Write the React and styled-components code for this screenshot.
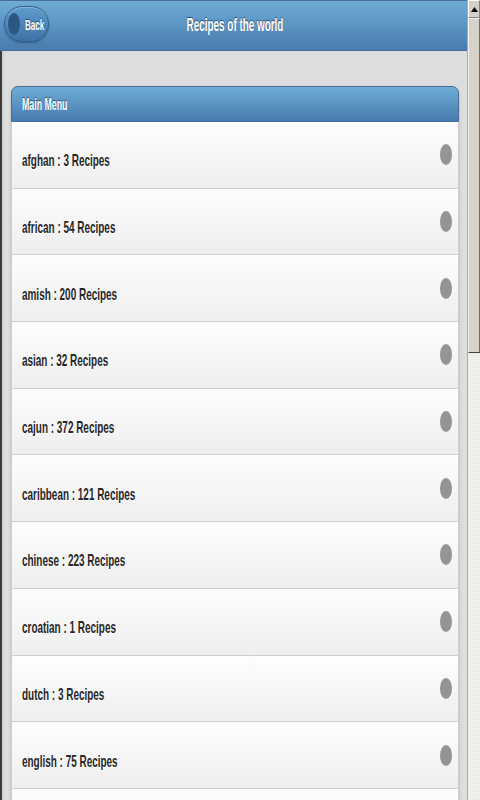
import React from "react";
import styled, { createGlobalStyle } from "styled-components";

const Global = createGlobalStyle`
  html, body { margin: 0; padding: 0; height: 800px; overflow: hidden; background: #dddddd; }
  body { font-family: "Liberation Sans", Arial, sans-serif; }
  * { box-sizing: border-box; }
`;

const Shell = styled.div`
  display: flex;
  width: 480px;
  height: 800px;
  overflow: hidden;
`;

const Main = styled.div`
  flex: 1;
  display: flex;
  flex-direction: column;
  min-width: 0;
`;

const Header = styled.header`
  height: 51px;
  flex: none;
  display: grid;
  grid-template-columns: 1fr auto 1fr;
  align-items: center;
  padding: 0 0 0 4px;
  background: linear-gradient(#6facd5, #497bae);
  border-top: 1px solid #456f9a;
  border-bottom: 1px solid #456f9a;
`;

const BackButton = styled.button`
  justify-self: start;
  display: flex;
  align-items: center;
  gap: 5px;
  width: 45px;
  height: 36px;
  padding: 0 0 0 3px;
  margin-top: -3px;
  border-radius: 18px;
  border: 1px solid #2f5f8f;
  background: linear-gradient(#5f9ccd, #3f72a6);
  box-shadow: inset 0 1px 0 rgba(255, 255, 255, 0.3), 0 1px 2px rgba(0, 0, 0, 0.3);
  cursor: pointer;
`;

const IconDisc = styled.span`
  flex: none;
  width: ${(p) => p.$w}px;
  height: ${(p) => p.$h}px;
  border-radius: 50%;
  background: ${(p) => p.$color};
`;

const Squeezed = styled.span`
  display: inline-block;
  white-space: nowrap;
  font-weight: bold;
  font-size: ${(p) => p.$size}px;
  line-height: ${(p) => p.$size}px;
  color: ${(p) => p.$color};
  text-shadow: ${(p) => p.$shadow};
  transform: scaleX(${(p) => p.$scale});
  transform-origin: ${(p) => p.$origin || "left center"};
`;

const Title = styled.h1`
  margin: -1px 0 0;
  text-align: center;
  font-size: inherit;
`;

const Content = styled.main`
  flex: 1;
  border-left: 2px solid #3c3c3c;
  box-shadow: inset 2px 0 0 #d2d2d2;
  padding: 35px 8px 0 9px;
  overflow: hidden;
`;

const Panel = styled.section`
  border-radius: 7px 7px 0 0;
  box-shadow: 0 1px 3px rgba(0, 0, 0, 0.2);
`;

const PanelHead = styled.div`
  height: 36px;
  display: flex;
  align-items: center;
  padding: 1px 0 0 10px;
  border: 1px solid #456f9a;
  border-radius: 7px 7px 0 0;
  background: linear-gradient(#6facd5, #497bae);
`;

const List = styled.ul`
  list-style: none;
  margin: 0;
  padding: 0;
  border-left: 1px solid #cfcfcf;
  border-right: 1px solid #cfcfcf;
`;

const Row = styled.li`
  height: 66.7px;
  display: flex;
  align-items: center;
  justify-content: space-between;
  padding: 0 6px 0 10px;
  border-bottom: 1px solid #d0d0d0;
  background: linear-gradient(#fefefe, #eeeeee);
`;

const RowLabel = styled.div`
  padding-top: 13px;
`;

const ScrollBar = styled.div`
  width: 13px;
  flex: none;
  display: flex;
  flex-direction: column;
  border-left: 1px solid #a9a9a9;
  background: repeating-linear-gradient(0deg, #eceae6 0 1px, #f4f3f0 1px 2px);
`;

const ArrowBtn = styled.div`
  height: 18px;
  display: flex;
  align-items: center;
  justify-content: center;
  background: #d4d0c8;
  border: 1px solid;
  border-color: #ffffff #808080 #808080 #ffffff;
`;

const Thumb = styled.div`
  height: 335px;
  background: #d6d2ca;
  border: 1px solid;
  border-color: #f4f2ee #6b6b6b #404040 #f4f2ee;
`;

const items = [
  ["afghan", 3],
  ["african", 54],
  ["amish", 200],
  ["asian", 32],
  ["cajun", 372],
  ["caribbean", 121],
  ["chinese", 223],
  ["croatian", 1],
  ["dutch", 3],
  ["english", 75],
];

export default function App() {
  return (
    <Shell>
      <Global />
      <Main>
        <Header>
          <BackButton>
            <IconDisc $w={12} $h={22} $color="#2c5782" />
            <Squeezed $size={15} $scale={0.54} $color="#fff" $shadow="0 -1px 1px #254f7a">
              Back
            </Squeezed>
          </BackButton>
          <Title>
            <Squeezed
              $size={18}
              $scale={0.55}
              $origin="center"
              $color="#fff"
              $shadow="0 -1px 1px #254f7a"
            >
              Recipes of the world
            </Squeezed>
          </Title>
          <span />
        </Header>
        <Content>
          <Panel>
            <PanelHead>
              <Squeezed $size={16} $scale={0.55} $color="#fff" $shadow="0 -1px 1px #254f7a">
                Main Menu
              </Squeezed>
            </PanelHead>
            <List>
              {items.map(([name, n]) => (
                <Row key={name}>
                  <RowLabel>
                    <Squeezed $size={17} $scale={0.585} $color="#262626" $shadow="0 1px 0 #fff">
                      {name} : {n} Recipes
                    </Squeezed>
                  </RowLabel>
                  <IconDisc $w={12} $h={21} $color="#949494" />
                </Row>
              ))}
              <Row aria-hidden="true" />
            </List>
          </Panel>
        </Content>
      </Main>
      <ScrollBar>
        <ArrowBtn>
          <svg width="7" height="5" viewBox="0 0 7 5">
            <polygon points="3.5,0 7,5 0,5" fill="#000" />
          </svg>
        </ArrowBtn>
        <Thumb />
      </ScrollBar>
    </Shell>
  );
}
